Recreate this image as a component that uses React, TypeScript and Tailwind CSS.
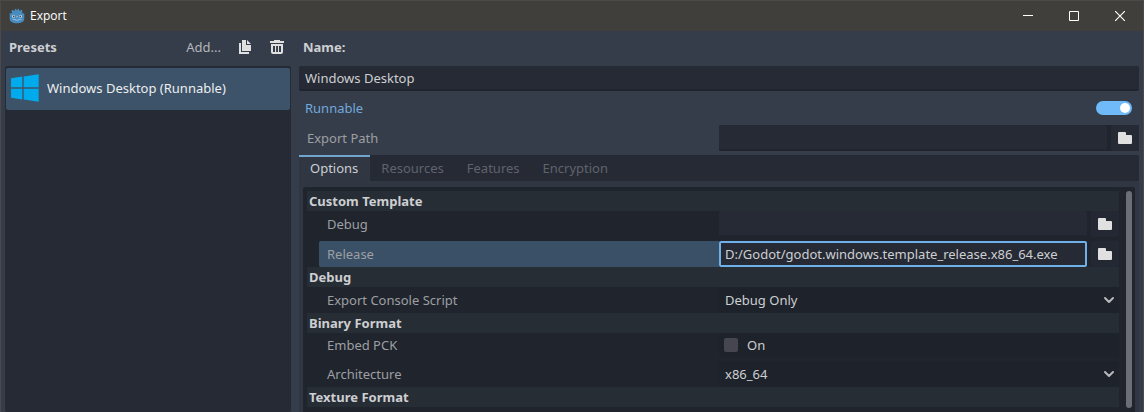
import { useState } from "react";
import type { ReactNode } from "react";

function GodotIcon() {
  return (
    <svg width="16" height="16" viewBox="0 0 16 16" aria-hidden="true">
      <path
        d="M6 .9 7.100.7l.5 1.500h.8l.5-1.500L10 .9l.2 1.500.8.4 1.400-1 1.300 1.200-.8 1.500.5.8h1.900v5.400c0 2.800-3 4.500-7.300 4.500S.7 13.500.7 10.700V5.300h1.900l.5-.8-.8-1.500 1.300-1.200 1.400 1 .8-.4z"
        fill="#478cbf"
      />
      <circle cx="4.500" cy="8.300" r="1.500" fill="#c9dcea" />
      <circle cx="11.500" cy="8.300" r="1.500" fill="#c9dcea" />
      <circle cx="4.700" cy="8.400" r=".8" fill="#414042" />
      <circle cx="11.300" cy="8.400" r=".8" fill="#414042" />
      <path d="M7.600 7.800h.8v1.700h-.8z" fill="#c9dcea" />
      <path d="M3.500 11.300h2.800v.9h3.400v-.9h2.800" fill="none" stroke="#a9c8e0" strokeWidth=".8" />
    </svg>
  );
}

function WindowsLogo() {
  return (
    <svg width="28" height="28" viewBox="0 0 28 28" aria-hidden="true" fill="#00abed">
      <path d="M0 4.200 11.300 2.600v10.700H0zM12.700 2.400 27.700.2v13.100h-15zM0 14.700h11.300v10.700L0 23.800zM12.700 14.700h15v13.100l-15-2.200z" />
    </svg>
  );
}

function DuplicateIcon() {
  return (
    <svg width="16" height="16" viewBox="0 0 16 16" aria-hidden="true" fill="#e0e0e0">
      <path d="M5 1v11h9V6H9V1zm5 0v4h4zM2 4v11h10v-2H4V4z" />
    </svg>
  );
}

function TrashIcon() {
  return (
    <svg width="16" height="16" viewBox="0 0 16 16" aria-hidden="true" fill="#e0e0e0">
      <path d="M5 1v1H1v2h14V2h-4V1zM2 5v8a2 2 0 0 0 2 2h8a2 2 0 0 0 2-2V5zm2 2h2v6H4zm3.100 0h1.900v6H7.100zM10 7h2v6h-2z" fillRule="evenodd" />
    </svg>
  );
}

function FolderIcon() {
  return (
    <svg width="16" height="16" viewBox="0 0 16 16" aria-hidden="true" fill="#e0e0e0">
      <path d="M2 2a1 1 0 0 0-1 1v10a1 1 0 0 0 1 1h12a1 1 0 0 0 1-1V6a1 1 0 0 0-1-1H9V3a1 1 0 0 0-1-1z" />
    </svg>
  );
}

function ChevronIcon() {
  return (
    <svg width="12" height="12" viewBox="0 0 12 12" aria-hidden="true" className="pointer-events-none absolute right-1 top-1/2 -translate-y-1/2">
      <path d="m2 4 4 4 4-4" fill="none" stroke="#b7b9bd" strokeWidth="2" strokeLinecap="round" strokeLinejoin="round" />
    </svg>
  );
}

function SectionHeader({ children }: { children: ReactNode }) {
  return <h2 className="h-5 bg-[#272d35] px-0.5 text-[13px] leading-5 font-bold text-[#cdcfd2]">{children}</h2>;
}

function Row({ id, label, selected = false, children }: { id: string; label: string; selected?: boolean; children: ReactNode }) {
  return (
    <div className="ml-3 grid grid-cols-2">
      <label htmlFor={id} className={`flex items-center rounded-l-xs px-2 text-[#9d9fa3] ${selected ? "bg-[#3a5067]" : ""}`}>
        {label}
      </label>
      <div className="flex min-w-0">{children}</div>
    </div>
  );
}

function FileField({ id, value, onChange }: { id: string; value: string; onChange: (v: string) => void }) {
  return (
    <>
      <input
        id={id}
        value={value}
        onChange={(e) => onChange(e.target.value)}
        className={`h-[26px] min-w-0 flex-1 rounded-xs border-2 bg-[#262a34] px-1 text-[#cdcfd2] outline-none ${value ? "border-[#70b0e8]" : "border-[#262a34] border-b-[#20252d]"}`}
      />
      <button type="button" aria-label="Browse" className="ml-1 flex h-[26px] w-7 items-center justify-center rounded-xs bg-[#232832]">
        <FolderIcon />
      </button>
    </>
  );
}

function SelectField({ id, options }: { id: string; options: string[] }) {
  return (
    <div className="relative flex-1">
      <select id={id} className="block h-[26px] w-full appearance-none bg-[#1e232b] px-1.5 text-[#cdcfd2] outline-none">
        {options.map((o) => (
          <option key={o}>{o}</option>
        ))}
      </select>
      <ChevronIcon />
    </div>
  );
}

const tabs = ["Options", "Resources", "Features", "Encryption"];

export default function App() {
  const [name, setName] = useState("Windows Desktop");
  const [runnable, setRunnable] = useState(true);
  const [path, setPath] = useState("");
  const [debug, setDebug] = useState("");
  const [release, setRelease] = useState("D:/Godot/godot.windows.template_release.x86_64.exe");
  const [embed, setEmbed] = useState(false);
  const [tab, setTab] = useState("Options");

  return (
    <div className="flex h-screen flex-col overflow-hidden border-x border-t border-[#4b4a48] bg-[#363d4a] font-['Noto_Sans',sans-serif] text-[13px] leading-5 text-[#cdcfd2]">
      <header className="flex h-[30px] shrink-0 items-center bg-[#403f3c] pl-2 text-white">
        <GodotIcon />
        <h1 className="ml-[5px] flex-1 font-['Open_Sans',sans-serif] text-xs">Export</h1>
        <button type="button" aria-label="Minimize" className="flex h-full w-[46px] items-center justify-center">
          <svg width="10" height="10" viewBox="0 0 10 10"><path d="M0 4.500h10" stroke="white" /></svg>
        </button>
        <button type="button" aria-label="Maximize" className="flex h-full w-[46px] items-center justify-center">
          <svg width="10" height="10" viewBox="0 0 10 10"><path d="M.5.5h9v9h-9z" fill="none" stroke="white" /></svg>
        </button>
        <button type="button" aria-label="Close" className="flex h-full w-[46px] items-center justify-center">
          <svg width="10" height="10" viewBox="0 0 10 10"><path d="m0 0 10 10M10 0 0 10" stroke="white" strokeWidth="1.200" /></svg>
        </button>
      </header>

      <div className="flex min-h-0 flex-1 gap-2 px-1">
        <aside className="flex w-[286px] shrink-0 flex-col">
          <div className="flex h-[35px] shrink-0 items-center pb-[3px] pl-1">
            <h2 className="flex-1 font-bold">Presets</h2>
            <button type="button" className="text-[#b3b6bb]">Add...</button>
            <button type="button" aria-label="Duplicate" className="ml-4"><DuplicateIcon /></button>
            <button type="button" aria-label="Delete" className="mr-1.5 ml-4"><TrashIcon /></button>
          </div>
          <ul className="flex-1 rounded-xs bg-[#262a34] px-px py-0.5">
            <li>
              <button type="button" className="flex h-[42px] w-full items-center gap-2 rounded-xs bg-[#3d5369] pb-0.5 pl-[5px] text-[#eceef0]">
                <WindowsLogo />
                Windows Desktop (Runnable)
              </button>
            </li>
          </ul>
        </aside>

        <main className="flex min-w-0 flex-1 flex-col">
          <label htmlFor="preset-name" className="flex h-[35px] shrink-0 items-center pb-[3px] pl-1 font-bold">Name:</label>
          <input
            id="preset-name"
            value={name}
            onChange={(e) => setName(e.target.value)}
            className="h-[25px] shrink-0 rounded-xs border-b-2 border-[#20242c] bg-[#262a34] px-1.5 outline-none"
          />
          <label className="flex h-[34px] shrink-0 items-center justify-between pr-[7px] pl-1.5 text-[#70a9dc]">
            Runnable
            <input type="checkbox" role="switch" checked={runnable} onChange={(e) => setRunnable(e.target.checked)} className="peer sr-only" />
            <span className="flex h-3.5 w-9 items-center justify-start rounded-full bg-[#5a5f69] px-0.5 peer-checked:justify-end peer-checked:bg-[#70bafa]">
              <span className="size-2.5 rounded-full bg-white" />
            </span>
          </label>
          <div className="grid shrink-0 grid-cols-2">
            <label htmlFor="export-path" className="flex items-center pl-2 text-[#9d9fa3]">Export Path</label>
            <div className="flex rounded-xs bg-[#20242e]">
              <input
                id="export-path"
                value={path}
                onChange={(e) => setPath(e.target.value)}
                className="h-[26px] min-w-0 flex-1 rounded-xs border-b-2 border-[#20242c] bg-[#262a34] px-1.5 outline-none"
              />
              <button type="button" aria-label="Browse export path" className="ml-1 flex w-7 items-center justify-center rounded-xs bg-[#262a34]">
                <FolderIcon />
              </button>
            </div>
          </div>

          <div role="tablist" className="mt-1 flex h-[26px] shrink-0 rounded-tr-xs bg-[#262a34]">
            {tabs.map((t) => (
              <button
                key={t}
                type="button"
                role="tab"
                aria-selected={t === tab}
                onClick={() => setTab(t)}
                className={`border-t-2 pr-3 pb-0.5 pl-[11px] ${t === tab ? "border-[#70a5d0] bg-[#303642] text-[#cdcfd2]" : "border-transparent text-[#5f636c]"}`}
              >
                {t}
              </button>
            ))}
          </div>

          <div className="flex min-h-0 flex-1 flex-col bg-[#303642] px-1 pt-1.5">
            <div className="flex min-h-0 flex-1 rounded-t-xs bg-[#20252d] pt-1 pr-[3px] pl-1">
              <div className="min-w-0 flex-1 overflow-hidden">
                <SectionHeader>Custom Template</SectionHeader>
                <div className="flex flex-col gap-1">
                  <Row id="debug" label="Debug"><FileField id="debug" value={debug} onChange={setDebug} /></Row>
                  <Row id="release" label="Release" selected><FileField id="release" value={release} onChange={setRelease} /></Row>
                </div>
                <SectionHeader>Debug</SectionHeader>
                <Row id="console" label="Export Console Script"><SelectField id="console" options={["Debug Only", "No", "Debug and Release"]} /></Row>
                <SectionHeader>Binary Format</SectionHeader>
                <div className="flex flex-col gap-1">
                  <Row id="embed" label="Embed PCK">
                    <label className="flex h-6 flex-1 items-center gap-[9px] bg-[#1e232b] pl-[5px]">
                      <input
                        id="embed"
                        type="checkbox"
                        checked={embed}
                        onChange={(e) => setEmbed(e.target.checked)}
                        className="size-3.5 appearance-none rounded-xs bg-[#45464f] checked:bg-[#70bafa]"
                      />
                      On
                    </label>
                  </Row>
                  <Row id="arch" label="Architecture"><SelectField id="arch" options={["x86_64", "x86_32", "arm64"]} /></Row>
                </div>
                <SectionHeader>Texture Format</SectionHeader>
              </div>
              <div className="ml-[7px] flex w-1.5 flex-col pb-1">
                <div className="flex-1 rounded-full bg-[#6b6e77]" />
              </div>
            </div>
          </div>
        </main>
      </div>
    </div>
  );
}
